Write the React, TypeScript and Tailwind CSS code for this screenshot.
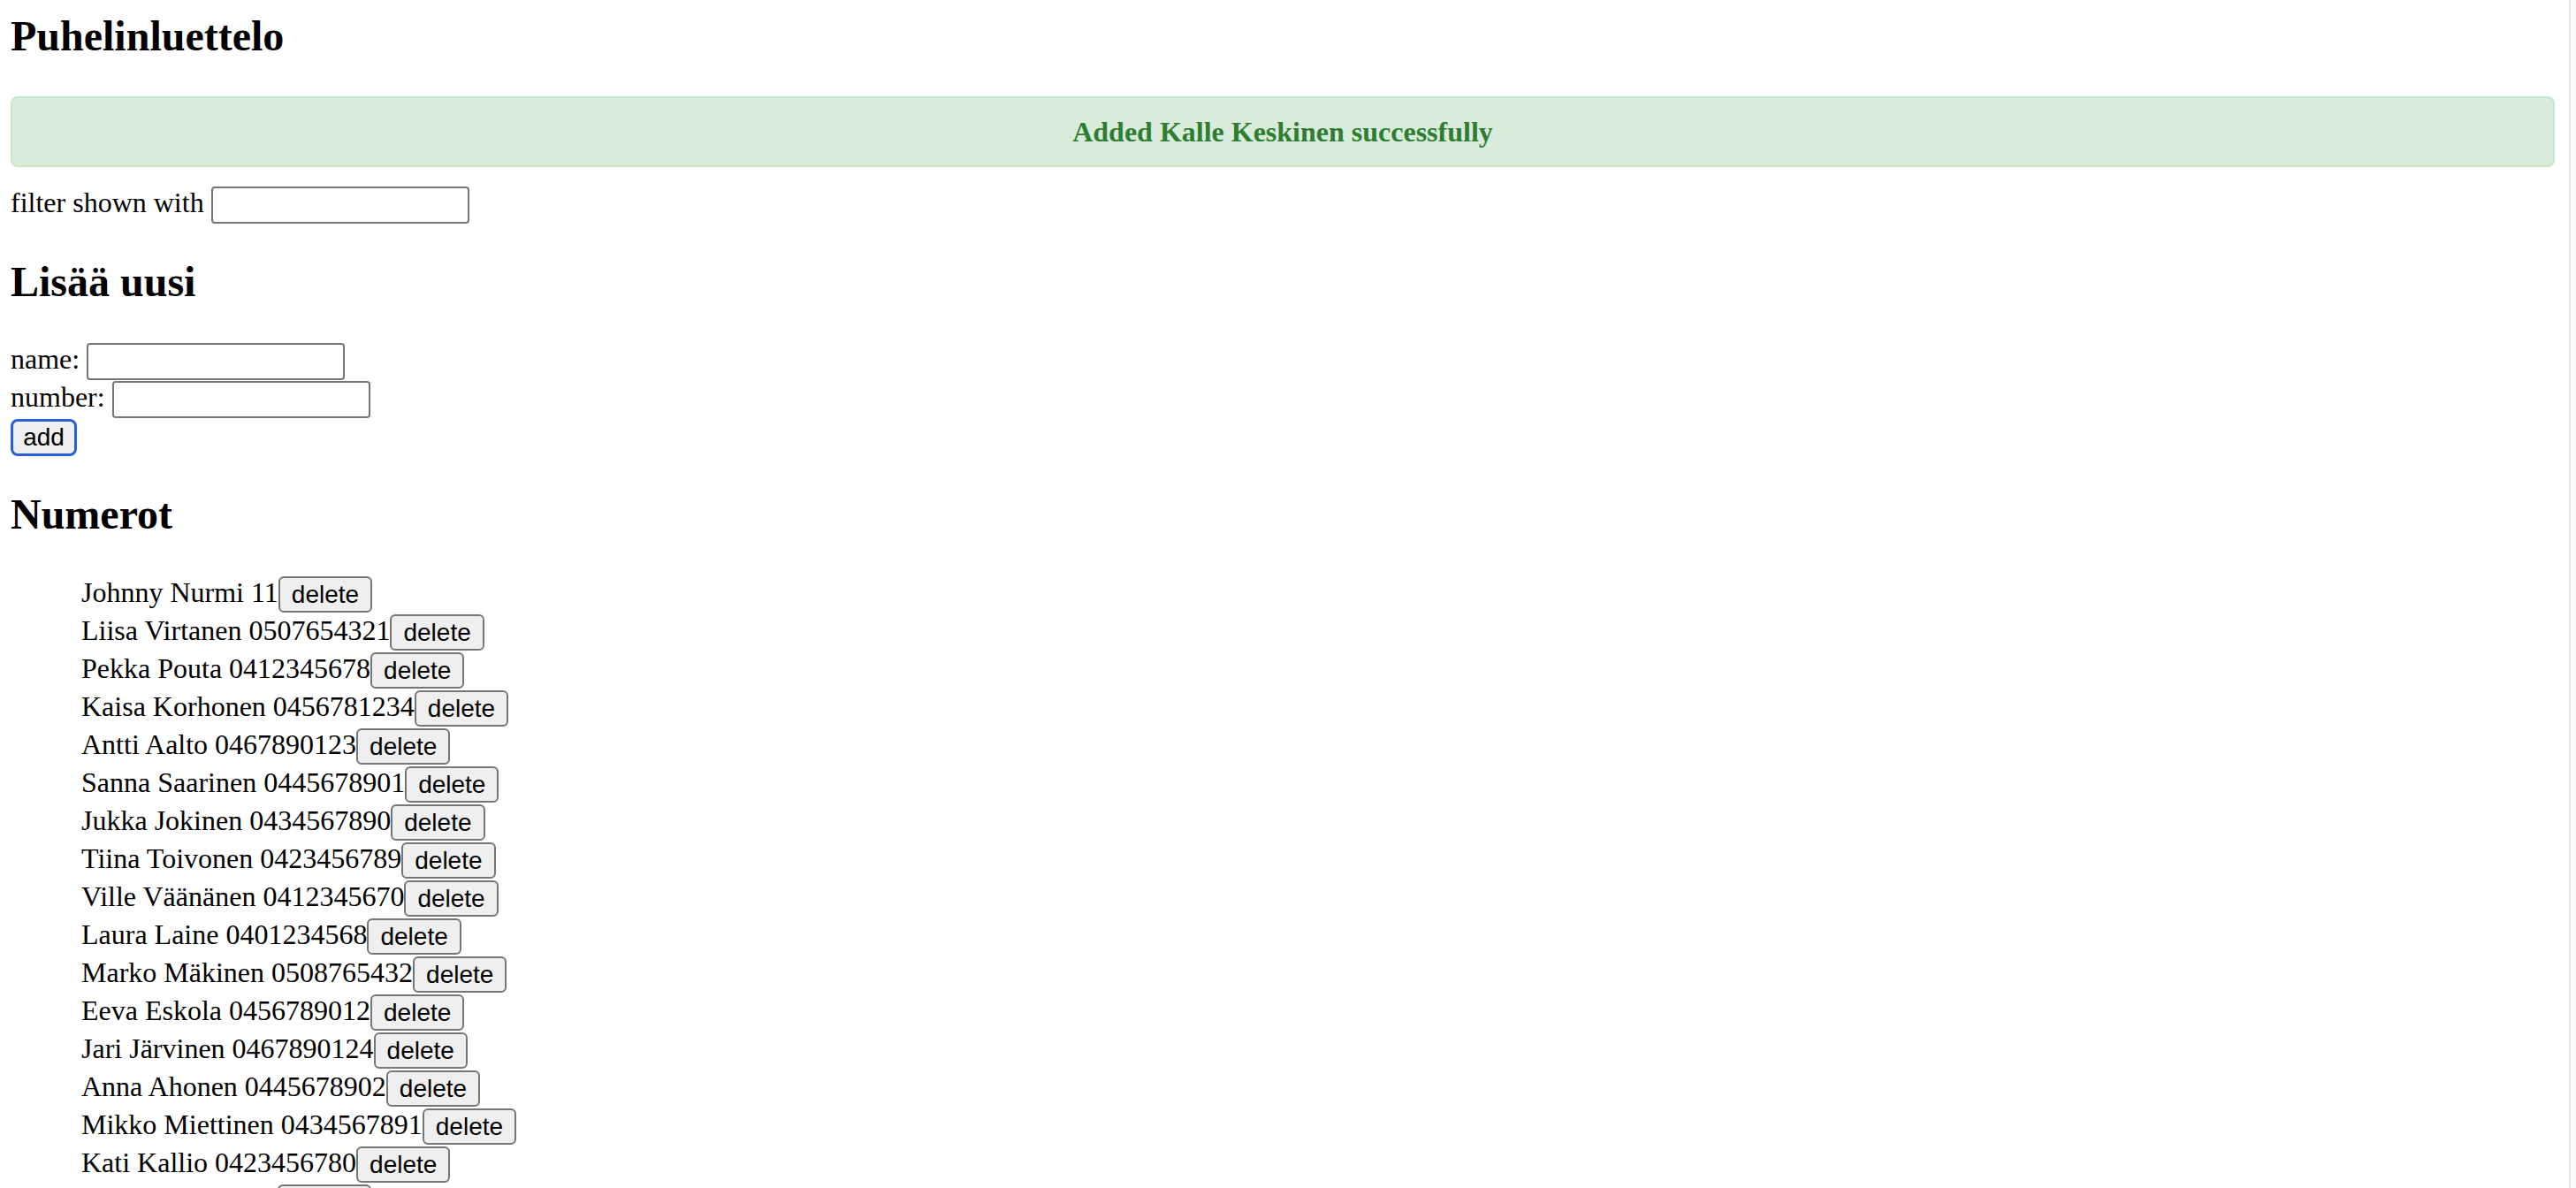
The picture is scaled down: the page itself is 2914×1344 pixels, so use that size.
const persons = [
  { id: 1, name: 'Johnny Nurmi', number: '11' },
  { id: 2, name: 'Liisa Virtanen', number: '0507654321' },
  { id: 3, name: 'Pekka Pouta', number: '0412345678' },
  { id: 4, name: 'Kaisa Korhonen', number: '0456781234' },
  { id: 5, name: 'Antti Aalto', number: '0467890123' },
  { id: 6, name: 'Sanna Saarinen', number: '0445678901' },
  { id: 7, name: 'Jukka Jokinen', number: '0434567890' },
  { id: 8, name: 'Tiina Toivonen', number: '0423456789' },
  { id: 9, name: 'Ville Väänänen', number: '0412345670' },
  { id: 10, name: 'Laura Laine', number: '0401234568' },
  { id: 11, name: 'Marko Mäkinen', number: '0508765432' },
  { id: 12, name: 'Eeva Eskola', number: '0456789012' },
  { id: 13, name: 'Jari Järvinen', number: '0467890124' },
  { id: 14, name: 'Anna Ahonen', number: '0445678902' },
  { id: 15, name: 'Mikko Miettinen', number: '0434567891' },
  { id: 16, name: 'Kati Kallio', number: '0423456780' },
  { id: 17, name: 'Kalle Keskinen', number: '1' },
];

const serif = "font-['Liberation_Serif','Times_New_Roman',serif]";

const Input = () => (
  <input
    type="text"
    className="w-[292px] h-[42px] border-2 border-[#767676] rounded-[4px] bg-white"
  />
);

const App = () => {
  return (
    <div className={`flex h-screen overflow-hidden bg-white text-black ${serif}`}>
      <div className="flex-1 pl-[12px] pr-[16px] pt-[13px]">
        <h2 className="text-[48px] leading-[56px] font-bold">Puhelinluettelo</h2>

        <div className="mt-[40px] h-[80px] flex items-center justify-center border-2 border-[#c8e6c9] bg-[#d9ecdc] rounded-[8px]">
          <span className="text-[32px] leading-[32px] font-bold text-[#2e7d32]">
            Added Kalle Keskinen successfully
          </span>
        </div>

        <div className="mt-[21px] h-[43px] flex items-center text-[32px]">
          <span className="leading-[32px] mb-[6px] mr-[8px]">filter shown with</span>
          <Input />
        </div>

        <h2 className="mt-[38px] text-[48px] leading-[56px] font-bold">Lisää uusi</h2>

        <form className="mt-[40px] text-[32px]">
          <div className="h-[43px] flex items-center">
            <span className="leading-[32px] mb-[6px] mr-[8px]">name:</span>
            <Input />
          </div>
          <div className="h-[43px] flex items-center">
            <span className="leading-[32px] mb-[6px] mr-[8px]">number:</span>
            <Input />
          </div>
          <div className="h-[43px] flex items-center">
            <button
              type="submit"
              className="w-[75px] h-[42px] border-[3px] border-[#2a62d4] rounded-[8px] bg-[#efefef] font-['Liberation_Sans',Arial,sans-serif] text-[28px] leading-none"
            >
              add
            </button>
          </div>
        </form>

        <h2 className="mt-[38px] text-[48px] leading-[56px] font-bold">Numerot</h2>

        <ul className="mt-[41px] pl-[80px] text-[32px]">
          {persons.map((p) => (
            <li key={p.id} className="h-[43px] flex items-center">
              <span className="leading-[32px] mb-[6px] whitespace-pre">
                {p.name} {p.number}
              </span>
              <button className="h-[41px] px-[13px] border-2 border-[#767676] rounded-[6px] bg-[#efefef] font-['Liberation_Sans',Arial,sans-serif] text-[28px] leading-none">
                delete
              </button>
            </li>
          ))}
        </ul>
      </div>
      <div className="w-[8px] border-l-2 border-[#e4e4e4] bg-[#fafafa]" />
    </div>
  );
};

export default App;
